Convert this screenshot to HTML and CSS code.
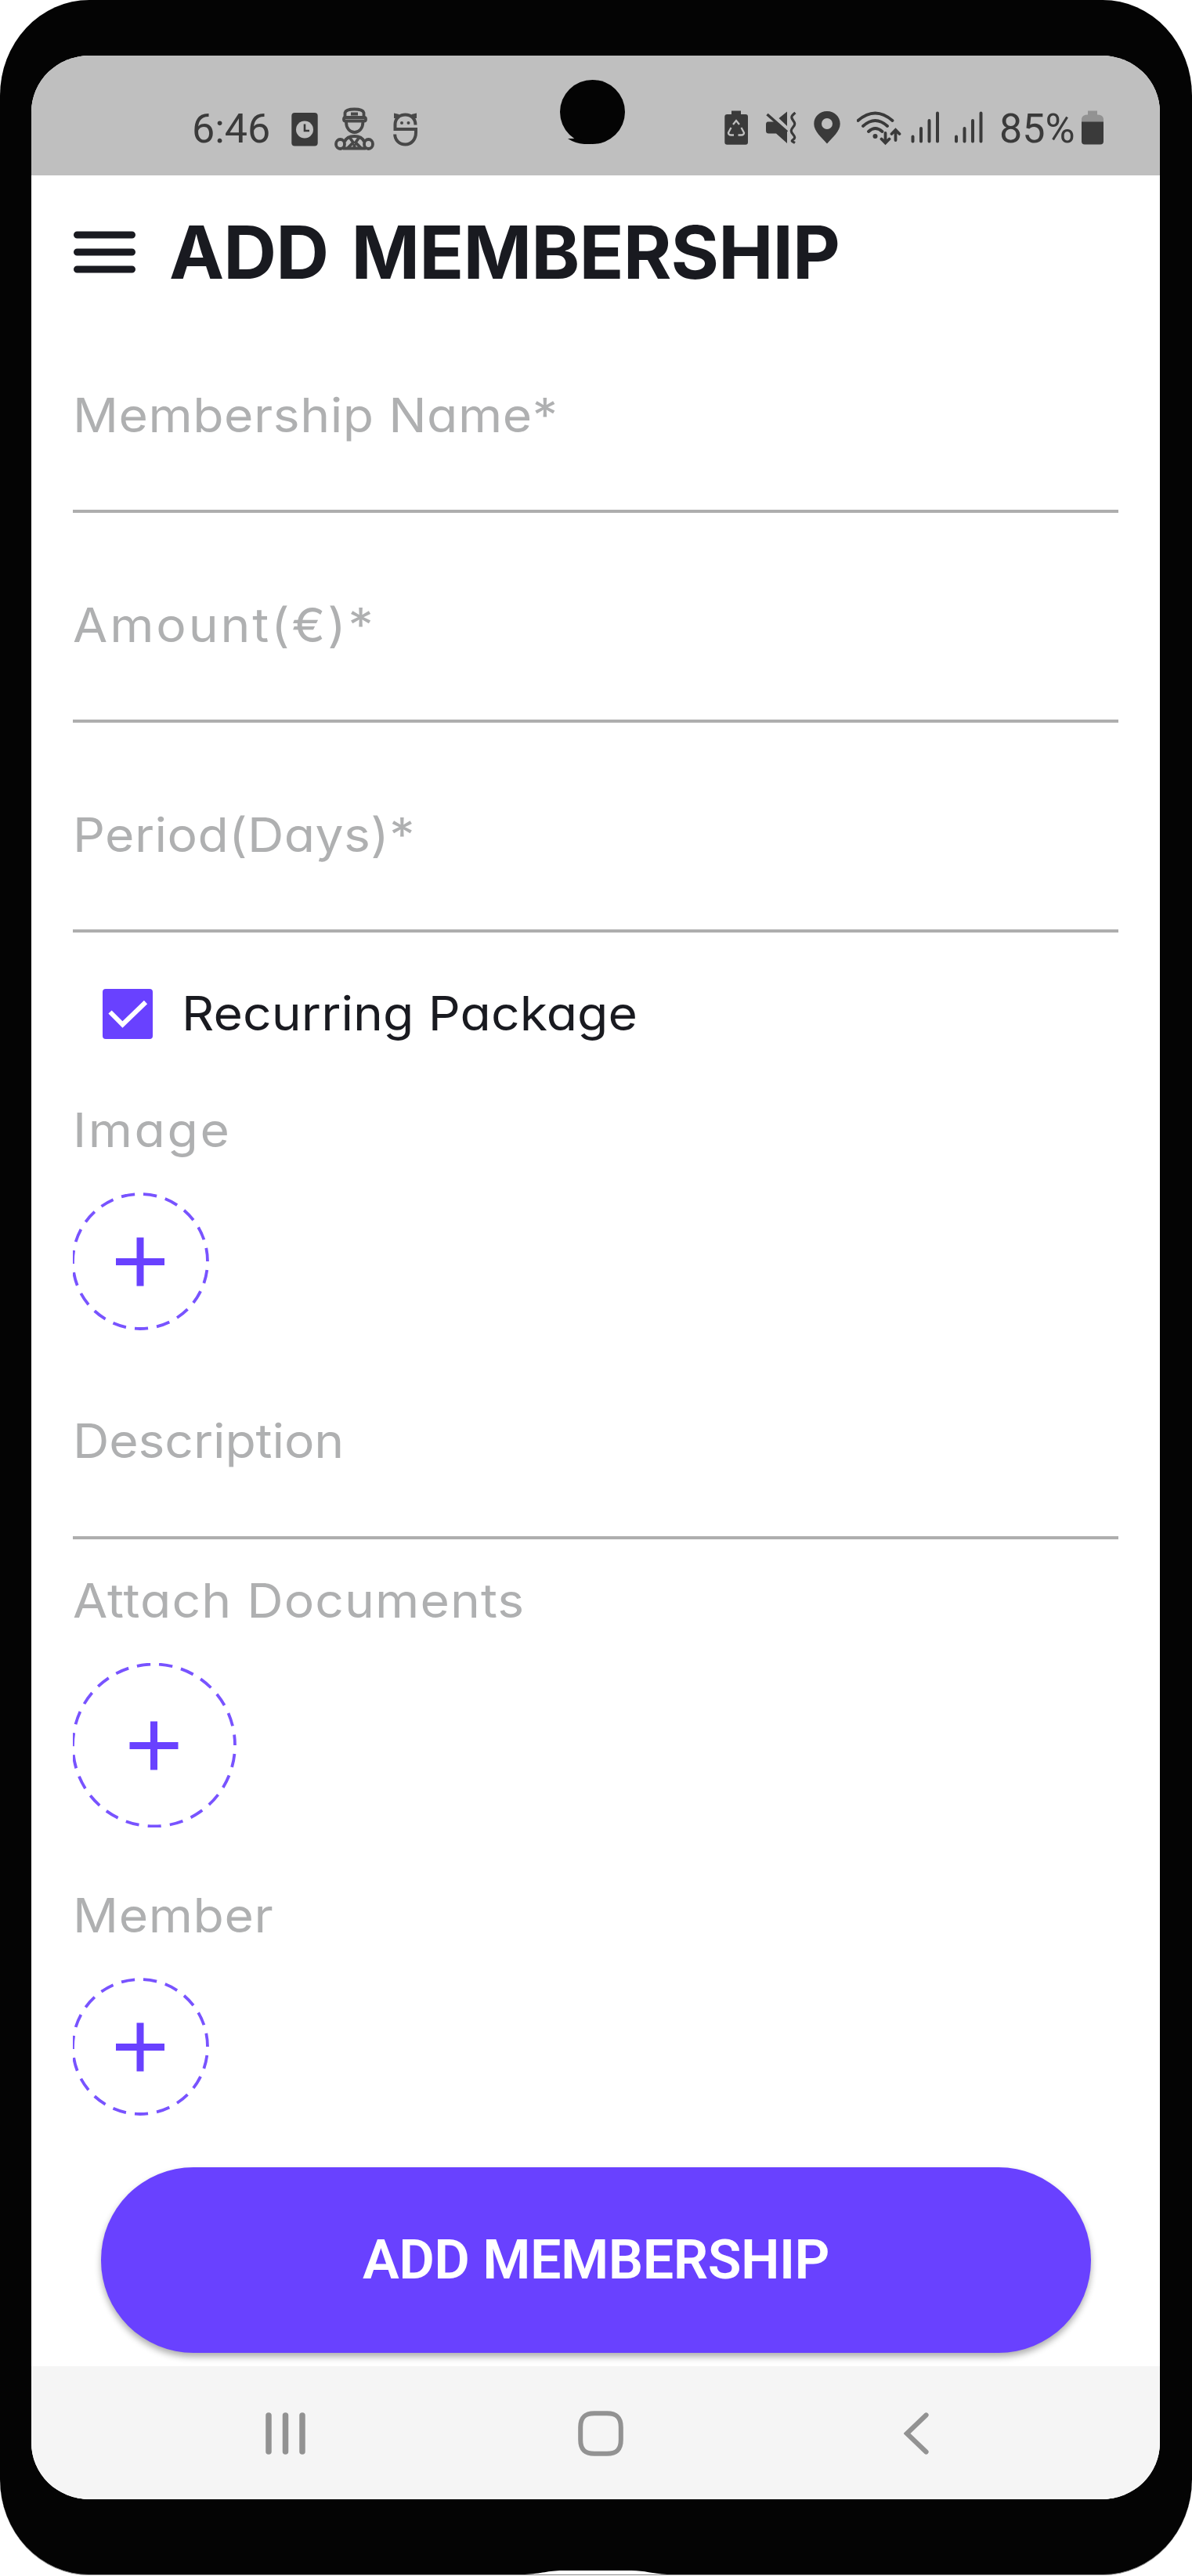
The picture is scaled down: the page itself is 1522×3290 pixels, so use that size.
FILE: index.html
```html
<!DOCTYPE html>
<html lang="en">
<head>
<meta charset="utf-8">
<title>Add Membership</title>
<link rel="stylesheet" href="styles.css">
</head>
<body>
<div class="phone">
  <main class="screen">
    <div class="status-bar">
      <div class="status-left">
        <span class="status-text">6:46</span>
        <svg width="55" height="59" viewBox="372 135 55 59">
          <rect x="372.3" y="144" width="33.4" height="42.5" rx="4" fill="#3a3a3a"/>
          <circle cx="389" cy="165.5" r="11" fill="#bfbfbf"/>
          <path d="M389 158.500v8.500h6" fill="none" stroke="#3a3a3a" stroke-width="2.600"/>
        </svg>
        <svg class="line" width="75" height="59" viewBox="427 135 75 59">
          <path d="M440.500 150v-6c1-4 6-4.500 12-4.500s11 .5 12 4.500v6"/>
          <rect x="439" y="150" width="28" height="4.500" rx="2"/>
          <path d="M448 145.500h9"/>
          <path d="M442 156c0 8 5 13 10.700 13s10.700-5 10.700-13"/>
          <ellipse cx="434.500" cy="184" rx="5.500" ry="6"/>
          <ellipse cx="470.500" cy="184" rx="5.500" ry="6"/>
          <path d="M440 181c2-5 7-7 12.500-7s10.500 2 12.500 7M444 189l7-7-5-7M461 189l-7-7 5-7M438 189.500h29M452.500 184v6"/>
        </svg>
        <svg class="line ghost" width="31" height="59" viewBox="502 135 31 59">
          <path d="M530.500 159.500c0-8-5.500-13-13-13s-13 5-13 12.500v6h26.500v4c0 9-5.500 15.500-13.500 15.500s-13.300-6-13.300-13M505 151v-4l4 1M530 151v-4l-4 1"/>
          <circle class="dot" cx="513" cy="157" r="2"/>
          <circle class="dot" cx="521.500" cy="157" r="2"/>
        </svg>
      </div>
      <div class="status-right">
        <svg width="52" height="59" viewBox="925 135 52 59">
          <path d="M934 141.500h12v4.500h6q3 0 3 3v32.500q0 3.200-3 3.200h-23.500q-3.200 0-3.200-3.200v-32.500q0-3 3.200-3h5.500z" fill="#3a3a3a"/>
          <path d="M936 159l4-5 4 5M933.500 163l-3.500 6.500q0 3 3.500 3h3.500M946.500 163l3.500 6.500q0 3-3.500 3h-4" fill="none" stroke="#bfbfbf" stroke-width="2.300"/>
        </svg>
        <svg width="62" height="59" viewBox="977 135 62 59">
          <path d="M980.500 155.500h8l16.500 12.500v15l-14-12.500h-9.500q-3.500 0-3.500-3.500v-8q0-3.500 2.500-3.500zM994.500 151l10.500-8.500v18.500z" fill="#3a3a3a"/>
          <path d="M979.500 146l25.500 22.500" stroke="#3a3a3a" stroke-width="3.500"/>
          <path d="M1015.500 144c-5 4-6 5.500-3 9.500s3 5.500 0 9 -3 5.500 0 9 3 5 0 7 0 2.500 2.500 4" stroke="#3a3a3a" stroke-width="3.200" fill="none"/>
        </svg>
        <svg width="55" height="59" viewBox="1039 135 55 59">
          <path fill-rule="evenodd" d="M1056 142c-9.500 0-16.700 7-16.700 16.200 0 9.300 9.700 17.300 16.700 25.300 7-8 16.700-16 16.700-25.300 0-9.200-7.200-16.200-16.700-16.200zm0 9a7 7 0 1 1 0 14 7 7 0 0 1 0-14z" fill="#3a3a3a"/>
        </svg>
        <svg class="wifi" width="69" height="59" viewBox="1094 135 69 59">
          <path d="M1095.500 154q22-19 44 0M1102 161q15.500-14 31 0M1109 168q8.500-8 17.500 0M1130.500 170v12M1125.500 177.500l5 5 5-5M1143.500 179v-12M1138.500 171l5-5 5 5"/>
          <circle cx="1117.500" cy="174" r="3"/>
        </svg>
        <svg class="bars" width="55" height="59" viewBox="1163 135 55 59"><path d="M1165.500 174.500v6M1176 164v16.500M1186.500 154v26.500M1197 144.500v36"/></svg>
        <svg class="bars" width="58" height="59" viewBox="1218 135 58 59"><path d="M1221 174.500v6M1231.500 164v16.500M1242 154v26.500M1252.500 144.500v36"/></svg>
        <span class="status-text">85%</span>
        <svg width="28" height="59" viewBox="1381 135 28 59">
          <path d="M1389 141.500h12v5q7 0 8 5v5h-28v-5q1-5 8-5z" fill="#929292"/>
          <path d="M1381 155.500h28v25q0 4-4 4h-20q-4 0-4-4z" fill="#3a3a3a"/>
        </svg>
      </div>
    </div>

    <header class="app-bar">
      <svg class="menu" width="79" height="54" viewBox="0 0 79 54"><path d="M4.500 5h70M4.500 27h70M4.500 49h70"/></svg>
      <h1 class="title">ADD MEMBERSHIP</h1>
    </header>

    <form class="form">
      <div class="field"><span class="label name">Membership Name*</span></div>
      <div class="field"><span class="label amount">Amount(€)*</span></div>
      <div class="field"><span class="label period">Period(Days)*</span></div>
      <div class="check-row">
        <svg width="64" height="64" viewBox="0 0 64 64"><rect width="64" height="64" rx="4" fill="#6941ff"/><path d="M9.500 29.500L25.500 45.500L55 17" fill="none" stroke="#fff" stroke-width="6"/></svg>
        <span class="label recurring">Recurring Package</span>
      </div>
      <div class="label image">Image</div>
      <svg class="add" width="176" height="176" viewBox="0 0 176 176"><circle cx="86" cy="88" r="86"/><path d="M55 88.500h62M86 57.500v62"/></svg>
      <div class="field description-field"><span class="label description">Description</span></div>
      <div class="label attach">Attach Documents</div>
      <svg class="add" width="212" height="210" viewBox="0 0 212 210"><circle cx="103.500" cy="105" r="103.500"/><path d="M72.500 105.500h62M103.500 74.500v62"/></svg>
      <div class="label member">Member</div>
      <svg class="add" width="176" height="176" viewBox="0 0 176 176"><circle cx="86" cy="88" r="86"/><path d="M55 88.500h62M86 57.500v62"/></svg>
      <button class="submit" type="button">ADD MEMBERSHIP</button>
    </form>

    <nav class="nav-bar">
      <svg width="52" height="54" viewBox="0 0 52 54"><path d="M4 4v46M25.500 4v46M47 4v46" stroke-width="7.500"/></svg>
      <svg class="home" width="58" height="58" viewBox="0 0 58 58"><path d="M21 3.200h16C49.500 3.200 54.800 8.500 54.800 21v16C54.800 49.500 49.500 54.800 37 54.800H21C8.500 54.800 3.200 49.500 3.200 37V21C3.200 8.500 8.500 3.200 21 3.200z" stroke-width="6"/></svg>
      <svg width="32" height="54" viewBox="0 0 32 54"><path d="M28.500 3.500L4 27l24.500 23.500" stroke-width="6.200"/></svg>
    </nav>
  </main>
  <svg class="camera" width="84" height="82" viewBox="0 0 84 82"><ellipse cx="42.500" cy="41" rx="41.500" ry="41"/><path d="M11 75h12l20 7H32Q20 81 11 75z"/></svg>
  <svg class="port" width="182" height="7" viewBox="0 0 182 7"><path d="M0 6C22 5 30 1 48 1h88c18 0 26 4 46 5v1H0z" fill="#fff"/></svg>
</div>
</body>
</html>
```
FILE: styles.css
```css
* { box-sizing: border-box; }
body { margin: 0; background: #fff; font-family: Inter, "Open Sans", sans-serif; }
svg { display: block; flex: none; }
.phone { position: relative; width: 1522px; height: 3289px; padding: 71px 41px 96px 40px; background: #040404; border-radius: 114px / 122px; overflow: hidden; border-bottom: 1px solid #8a8a8a; }
.screen { display: flex; flex-direction: column; height: 3121px; background: #fff; border-radius: 74px / 72px; overflow: hidden; }

.status-bar { display: flex; justify-content: space-between; height: 153px; padding: 64px 72px 0 205px; background: #bfbfbf; }
.status-left, .status-right { display: flex; height: 59px; }
.status-text { width: 127px; font: 400 52px/59px Roboto, sans-serif; color: #3a3a3a; }
.status-right .status-text { width: 105px; }
.line { fill: none; stroke: #484848; stroke-width: 3.8; }
.ghost { stroke-width: 4; }
.dot { fill: #484848; stroke: none; }
.wifi { fill: none; stroke: #3a3a3a; stroke-width: 3.8; stroke-linecap: round; }
.wifi circle { fill: #3a3a3a; stroke: none; }
.bars { stroke: #3a3a3a; stroke-width: 4; stroke-linecap: round; }

.app-bar { display: flex; align-items: center; gap: 43px; height: 163px; padding: 33px 0 0 54px; }
.menu { stroke: #191a20; stroke-width: 9; stroke-linecap: round; }
.title { margin: 0; font-size: 94px; font-weight: 750; line-height: 130px; letter-spacing: -.9px; word-spacing: 8px; color: #191a20; white-space: nowrap; }

.form { display: flex; flex-direction: column; padding: 0 53px; }
.field { height: 268px; padding-top: 104px; border-bottom: 4px solid #aeaeae; }
.label { display: block; height: 80px; font-size: 60px; line-height: 78px; color: #afb0b1; white-space: nowrap; font-feature-settings: "cv11"; transform: scaleX(1.07); transform-origin: left center; }
.name { letter-spacing: .5px; }
.amount { letter-spacing: 2.7px; }
.period { letter-spacing: .4px; }
.check-row { display: flex; align-items: center; gap: 37px; height: 80px; margin-top: 64px; padding-left: 38px; }
.recurring { color: #191a20; letter-spacing: .1px; }
.image { margin-top: 69px; letter-spacing: 2.4px; }
.description { letter-spacing: -.1px; }
.attach { margin-top: 39px; letter-spacing: 1px; }
.member { margin-top: 73px; letter-spacing: .6px; }
.description-field { height: 267px; padding-top: 102px; }
.add { margin-top: 39px; fill: none; stroke: #6941ff; }
.add circle { stroke: #7853ff; stroke-width: 3.8; stroke-dasharray: 17.3 11.1; stroke-dashoffset: 17.3; }
.add path { stroke-width: 9; }
.submit { height: 237px; margin: 66px 35px 0 36px; padding: 0; border: 0; border-radius: 118px; background: #6941ff; color: #fff; font: 600 70px/237px Roboto, sans-serif; letter-spacing: -.5px; box-shadow: 0 5px 9px rgba(0, 0, 0, .32); white-space: nowrap; }

.nav-bar { display: flex; justify-content: space-between; align-items: center; height: 170px; margin-top: 17px; padding: 4px 295px 0 299px; background: #f5f5f5; border-bottom: 2px solid #fff; }
.nav-bar path { fill: none; stroke: #929292; stroke-linecap: round; }
.home { margin-right: 12px; }
.camera { position: absolute; left: 714px; top: 102px; fill: #040404; }
.port { position: absolute; left: 670px; bottom: -1px; }
```
